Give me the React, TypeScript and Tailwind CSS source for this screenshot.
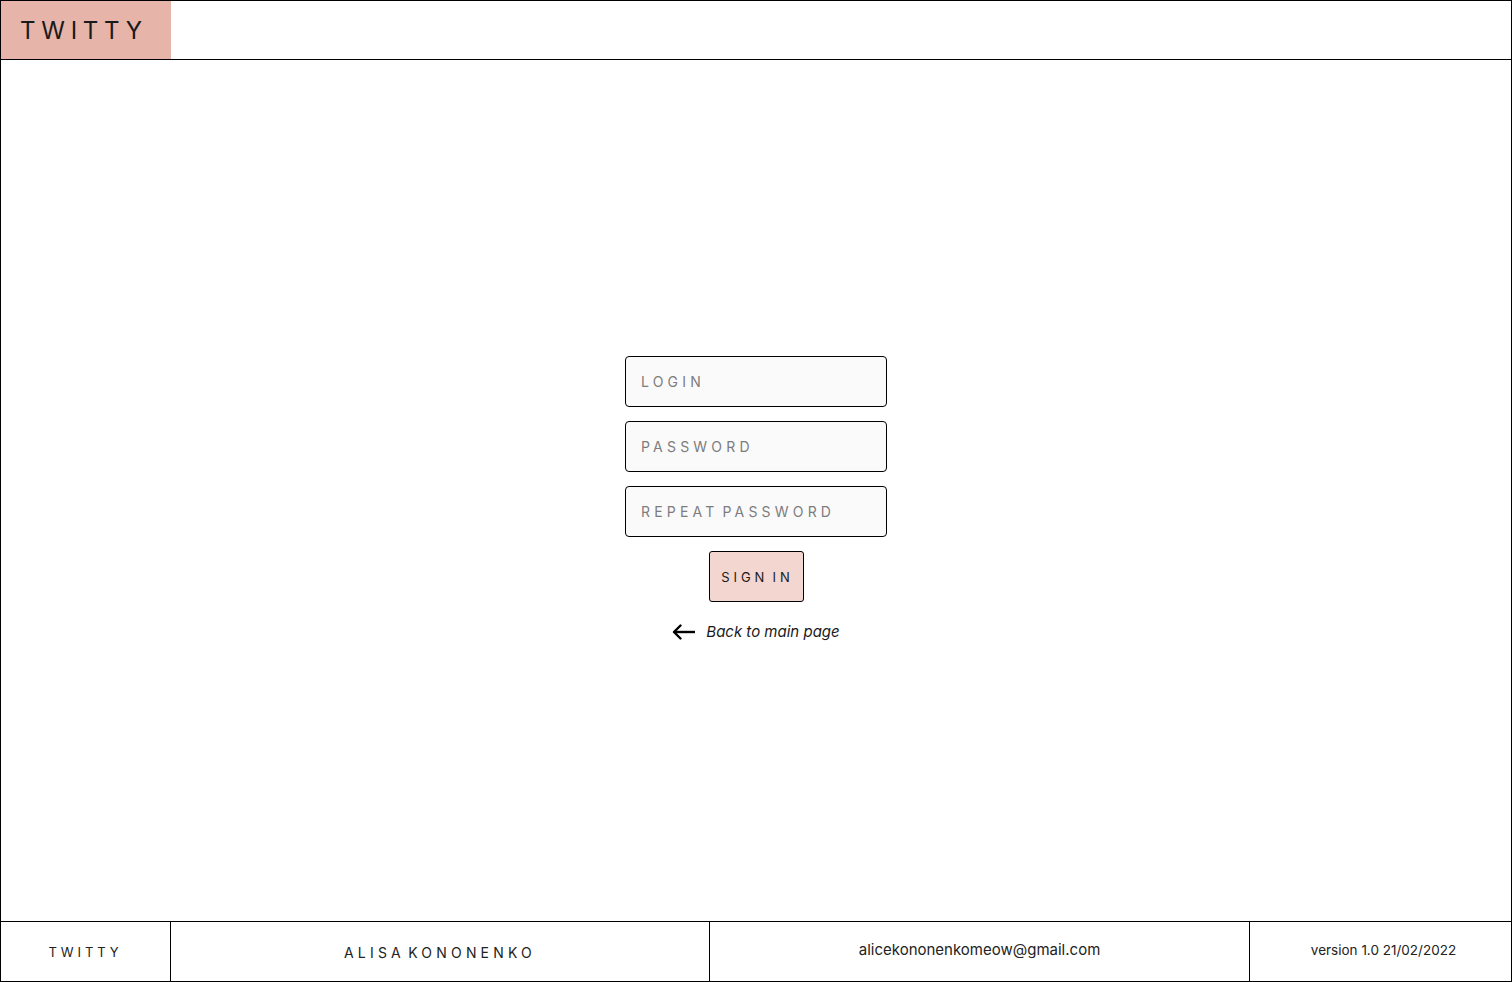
const font = { fontFamily: "Inter, 'Noto Sans', sans-serif" };

function Field({ placeholder }: { placeholder: string }) {
  return (
    <input
      type="text"
      placeholder={placeholder}
      className="h-[51px] w-[262px] rounded-[4px] border border-black bg-[#fafafa] px-[15px] text-[14px] tracking-[0.3em] [word-spacing:-0.3em] text-black outline-none placeholder:text-[#7d7d7d]"
    />
  );
}

function BackArrow() {
  return (
    <svg width="24" height="16" viewBox="0 0 24 16" fill="none" aria-hidden>
      <path d="M23 8H2" stroke="black" strokeWidth="2.4" />
      <path d="M8.5 1.5 2 8l6.5 6.5" stroke="black" strokeWidth="2.4" strokeLinecap="round" strokeLinejoin="round" />
    </svg>
  );
}

export default function App() {
  return (
    <div
      className="flex h-[982px] w-full flex-col border border-black bg-white text-black"
      style={font}
    >
      <header className="flex h-[59px] shrink-0 border-b border-black">
        <div className="flex w-[170px] items-center bg-[#e6b4a8] pl-[19px] pt-[2px] text-[24px] tracking-[0.24em] text-[#1a1a1a]">
          TWITTY
        </div>
      </header>

      <main className="flex flex-1 flex-col items-center pt-[296px]">
        <div className="flex flex-col gap-[14px]">
          <Field placeholder="LOGIN" />
          <Field placeholder="PASSWORD" />
          <Field placeholder="REPEAT PASSWORD" />
        </div>
        <button className="mt-[14px] h-[51px] w-[95px] rounded-[3px] border border-black bg-[#f3d6d0] pl-[3px] pt-[2px] text-[13px] tracking-[0.3em] [word-spacing:-0.25em] text-[#1a1a1a]">
          SIGN IN
        </button>
        <a
          href="#"
          className="mt-[19px] flex items-center gap-[10px] text-[15px] italic text-[#1a1a1a]"
        >
          <BackArrow />
          Back to main page
        </a>
      </main>

      <footer className="flex h-[60px] shrink-0 border-t border-black text-[13px]">
        <div className="flex w-[170px] items-center justify-center border-r border-black pt-[3px] tracking-[0.3em] text-[#222]">
          TWITTY
        </div>
        <div className="flex w-[539px] items-center justify-center border-r border-black pt-[2px] text-[14px] tracking-[0.3em] [word-spacing:-0.35em] text-[#222]">
          ALISA KONONENKO
        </div>
        <div className="flex w-[540px] items-center justify-center border-r border-black pb-[2px] text-[15px] text-[#222]">
          alicekononenkomeow@gmail.com
        </div>
        <div className="flex flex-1 items-center justify-center pb-[2px] pl-[6px] text-[13.5px] text-[#222]">
          version 1.0 21/02/2022
        </div>
      </footer>
    </div>
  );
}
